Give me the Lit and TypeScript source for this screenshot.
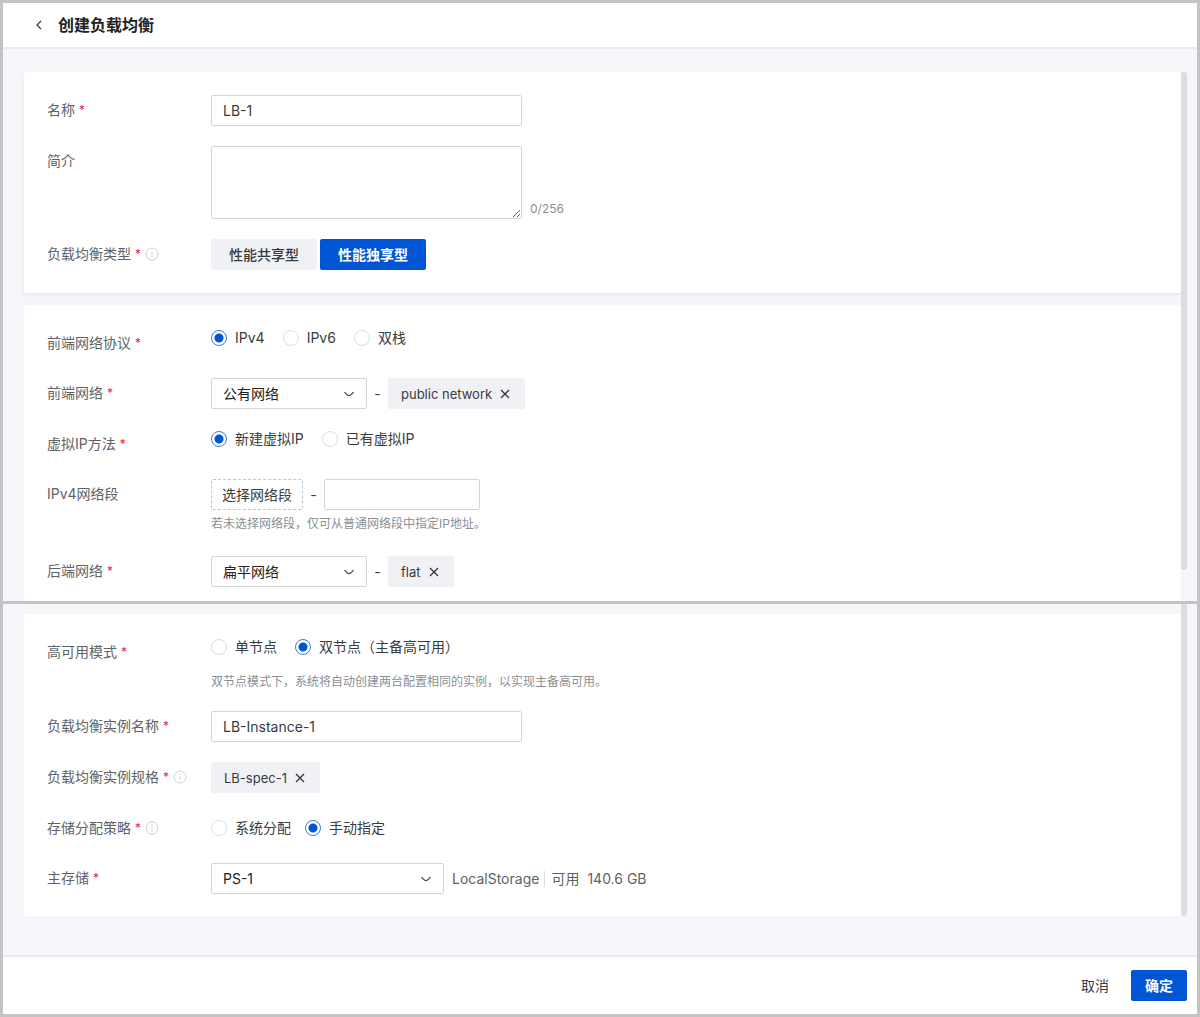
import { LitElement, html, css, svg, nothing } from "lit";
import { customElement, state } from "lit/decorators.js";
import { classMap } from "lit/directives/class-map.js";

type Option = { value: string; text: string };

const chevron = html`<svg class="chevron" viewBox="0 0 12 12" aria-hidden="true">
  <path d="M1.5 4.2 C3 6 4.8 7.6 6 7.6 C7.2 7.6 9 6 10.5 4.2" />
</svg>`;

const cross = svg`<path d="M1 1 L9 9 M9 1 L1 9" />`;

const info = html`<svg class="info" viewBox="0 0 14 14" role="img" aria-label="说明">
  <circle cx="7" cy="7" r="6" />
  <path d="M7 6 V10.2 M7 3.8 V5" />
</svg>`;

@customElement("app-root")
export class AppRoot extends LitElement {
  @state() private kind = "dedicated";
  @state() private summary = "";

  static styles = css`
    :host {
      display: block;
      color: #3a3b3d;
      font: 14px/20px Inter, "Noto Sans CJK SC", sans-serif;
    }
    * {
      box-sizing: border-box;
    }
    button,
    input,
    select,
    textarea {
      margin: 0;
      font: inherit;
      color: inherit;
    }
    button {
      cursor: pointer;
    }
    .page {
      display: flex;
      flex-direction: column;
      min-height: 100vh;
      border: 3px solid #c3c3c3;
      background: #f5f6fa;
    }
    .header {
      display: flex;
      align-items: center;
      gap: 7px;
      height: 46px;
      padding: 0 24px;
      border-bottom: 2px solid #e9eaed;
      background: #fff;
    }
    .back {
      display: grid;
      place-items: center;
      width: 24px;
      height: 24px;
      padding: 0;
      border: 0;
      background: none;
    }
    .back svg {
      width: 10px;
      height: 10px;
      fill: none;
      stroke: #333;
      stroke-width: 1.2;
    }
    .title {
      margin: 0;
      color: #222;
      font-size: 16px;
      font-weight: 600;
      line-height: 24px;
    }
    .pane {
      display: grid;
      grid-template-columns: minmax(0, 1fr) 6px;
      padding: 23px 10px 0 21px;
    }
    .pane.lower {
      flex: 1;
      align-content: start;
      padding-top: 0;
      padding-bottom: 39px;
      border-top: 3px solid #c3c3c3;
    }
    .cards {
      display: flex;
      flex-direction: column;
      gap: 12px;
    }
    .lower .cards {
      padding-top: 10px;
    }
    .thumb {
      margin-bottom: 31px;
      border-radius: 3px;
      background: #dcdddf;
    }
    .lower .thumb {
      margin-bottom: 0;
      border-radius: 0 0 3px 3px;
    }
    .card {
      display: flex;
      flex-direction: column;
      gap: 20px;
      padding: 23px;
      border-radius: 2px;
      background: #fff;
      box-shadow: 0 2px 3px rgba(30, 40, 70, 0.07);
    }
    .card.cut {
      padding-bottom: 14px;
      border-radius: 2px 2px 0 0;
      box-shadow: none;
    }
    .lower .card {
      padding-bottom: 22px;
      box-shadow: none;
    }
    .row {
      display: grid;
      grid-template-columns: 164px minmax(0, 1fr);
    }
    .name {
      display: flex;
      align-items: center;
      gap: 4px;
      height: 30px;
      color: #606266;
    }
    .star {
      color: #f5222d;
      font-size: 12px;
    }
    .info {
      width: 14px;
      height: 14px;
      fill: none;
      stroke: #cfd0d3;
    }
    .line {
      display: flex;
      align-items: center;
      min-height: 30px;
    }
    .line.top {
      align-items: flex-start;
    }
    .line.end {
      align-items: flex-end;
      gap: 8px;
    }
    .field {
      width: 311px;
      height: 31px;
      padding: 0 11px;
      border: 1px solid #d3d5d8;
      border-radius: 2px;
      background: #fff;
    }
    .field.short {
      width: 156px;
    }
    textarea.field {
      display: block;
      height: 73px;
      padding: 5px 11px;
    }
    .count {
      color: #8c8e92;
      font-size: 12px;
    }
    .segment {
      height: 31px;
      padding: 0 18px;
      border: 0;
      border-radius: 2px;
      background: #f0f1f5;
      font-weight: 500;
    }
    .segment.on {
      background: #0055d4;
      color: #fff;
      font-weight: 600;
    }
    .segments {
      gap: 3px;
    }
    .radios {
      gap: 18px;
    }
    .radios.tight {
      gap: 14px;
    }
    .radio {
      display: flex;
      align-items: center;
      gap: 8px;
    }
    .radio input {
      appearance: none;
      width: 16px;
      height: 16px;
      border: 1px solid #dcdde0;
      border-radius: 50%;
      background: #fff;
    }
    .radio input:checked {
      border-color: #3a7be6;
      background: radial-gradient(circle, #0055d4 4px, #fff 5px);
    }
    .pick {
      display: grid;
      width: 156px;
      align-items: center;
    }
    .pick.wide {
      width: 233px;
    }
    .pick select {
      grid-area: 1 / 1;
      width: 100%;
      height: 31px;
      padding: 0 30px 0 11px;
      border: 1px solid #d3d5d8;
      border-radius: 2px;
      background: #fff;
      color: #222;
      appearance: none;
    }
    .chevron {
      grid-area: 1 / 1;
      justify-self: end;
      width: 12px;
      height: 12px;
      margin-right: 12px;
      fill: none;
      stroke: #444;
      stroke-width: 1.3;
      pointer-events: none;
    }
    .dash {
      width: 21px;
      text-align: center;
    }
    .tag {
      display: flex;
      align-items: center;
      gap: 8px;
      height: 31px;
      padding: 0 15px 0 13px;
      border-radius: 2px;
      background: #f0f1f5;
      font-size: 13px;
    }
    .remove {
      display: grid;
      padding: 0;
      border: 0;
      background: none;
    }
    .remove svg {
      width: 10px;
      height: 10px;
      fill: none;
      stroke: #333;
      stroke-width: 1.3;
    }
    .choose {
      height: 31px;
      padding: 0 10px;
      border: 1px dashed #c4c6ca;
      border-radius: 2px;
      background: #fff;
    }
    .hint {
      margin: 5px 0 3px;
      color: #8c8e92;
      font-size: 12px;
      line-height: 18px;
    }
    .line.top + .hint {
      margin: 6px 0 0;
    }
    .storage {
      display: flex;
      align-items: center;
      margin-left: 8px;
      color: #606266;
    }
    .free {
      display: flex;
      gap: 8px;
      margin-left: 5px;
      padding-left: 6px;
      border-left: 1px solid #dcdde0;
      line-height: 16px;
    }
    .footer {
      display: flex;
      justify-content: flex-end;
      align-items: center;
      gap: 8px;
      padding: 13px 10px;
      border-top: 2px solid #e9eaed;
      background: #fff;
    }
    .cancel,
    .confirm {
      height: 31px;
      padding: 0 14px;
      border: 0;
      border-radius: 2px;
      background: none;
    }
    .confirm {
      background: #0055d4;
      color: #fff;
      font-weight: 600;
    }
  `;

  private caption(id: string, text: string, required = true, help = false, group = false) {
    const body = html`<span>${text}</span>${required ? html`<span class="star">*</span>` : nothing}${help
        ? info
        : nothing}`;
    return group
      ? html`<div class="name" id="${id}-name">${body}</div>`
      : html`<label class="name" for=${id}>${body}</label>`;
  }

  private radios(id: string, options: Option[], chosen: string, variant: string) {
    return html`<div class="line radios ${variant}" role="radiogroup" aria-labelledby="${id}-name">
      ${options.map(
        (o) => html`<label class="radio"
          ><input type="radio" name=${id} value=${o.value} ?checked=${o.value === chosen} />${o.text}</label
        >`
      )}
    </div>`;
  }

  private pick(id: string, text: string, wide = false) {
    return html`<div class=${classMap({ pick: true, wide })}>
      <select id=${id}>
        <option>${text}</option>
      </select>
      ${chevron}
    </div>`;
  }

  private tag(text: string, id = "") {
    return html`<span class="tag"
      >${text}<button class="remove" id=${id || nothing} type="button" aria-label="移除 ${text}">
        <svg viewBox="0 0 10 10">${cross}</svg>
      </button></span
    >`;
  }

  private segment(value: string, text: string) {
    const on = this.kind === value;
    return html`<button
      type="button"
      class=${classMap({ segment: true, on })}
      aria-pressed=${on ? "true" : "false"}
      @click=${() => (this.kind = value)}
    >
      ${text}
    </button>`;
  }

  render() {
    return html`<div class="page">
      <header class="header">
        <button class="back" type="button" aria-label="返回">
          <svg viewBox="0 0 10 10"><path d="M7 0.8 L3 5 L7 9.2" /></svg>
        </button>
        <h1 class="title">创建负载均衡</h1>
      </header>

      <main class="pane">
        <div class="cards">
          <section class="card">
            <div class="row">
              ${this.caption("name", "名称")}
              <div class="line"><input class="field" id="name" type="text" value="LB-1" /></div>
            </div>
            <div class="row">
              ${this.caption("summary", "简介", false)}
              <div class="line end">
                <textarea
                  class="field"
                  id="summary"
                  maxlength="256"
                  @input=${(e: Event) => (this.summary = (e.target as HTMLTextAreaElement).value)}
                ></textarea>
                <span class="count">${this.summary.length}/256</span>
              </div>
            </div>
            <div class="row">
              ${this.caption("kind", "负载均衡类型", true, true, true)}
              <div class="line segments" role="group" aria-labelledby="kind-name">
                ${this.segment("shared", "性能共享型")}${this.segment("dedicated", "性能独享型")}
              </div>
            </div>
          </section>

          <section class="card cut">
            <div class="row">
              ${this.caption("protocol", "前端网络协议", true, false, true)}
              ${this.radios(
                "protocol",
                [
                  { value: "4", text: "IPv4" },
                  { value: "6", text: "IPv6" },
                  { value: "dual", text: "双栈" },
                ],
                "4",
                "top"
              )}
            </div>
            <div class="row">
              ${this.caption("front", "前端网络")}
              <div class="line">${this.pick("front", "公有网络")}<span class="dash">-</span>${this.tag("public network")}</div>
            </div>
            <div class="row">
              ${this.caption("vip", "虚拟IP方法", true, false, true)}
              ${this.radios(
                "vip",
                [
                  { value: "new", text: "新建虚拟IP" },
                  { value: "existing", text: "已有虚拟IP" },
                ],
                "new",
                "top"
              )}
            </div>
            <div class="row">
              ${this.caption("range", "IPv4网络段", false)}
              <div>
                <div class="line">
                  <button class="choose" type="button">选择网络段</button><span class="dash">-</span
                  ><input class="field short" id="range" type="text" />
                </div>
                <p class="hint">若未选择网络段，仅可从普通网络段中指定IP地址。</p>
              </div>
            </div>
            <div class="row">
              ${this.caption("back", "后端网络")}
              <div class="line">${this.pick("back", "扁平网络")}<span class="dash">-</span>${this.tag("flat")}</div>
            </div>
          </section>
        </div>
        <div class="thumb"></div>
      </main>

      <div class="pane lower">
        <div class="cards">
          <section class="card">
            <div class="row">
              ${this.caption("mode", "高可用模式", true, false, true)}
              <div>
                ${this.radios(
                  "mode",
                  [
                    { value: "single", text: "单节点" },
                    { value: "double", text: "双节点（主备高可用）" },
                  ],
                  "double",
                  "top"
                )}
                <p class="hint">双节点模式下，系统将自动创建两台配置相同的实例，以实现主备高可用。</p>
              </div>
            </div>
            <div class="row">
              ${this.caption("instance", "负载均衡实例名称")}
              <div class="line"><input class="field" id="instance" type="text" value="LB-Instance-1" /></div>
            </div>
            <div class="row">
              ${this.caption("spec", "负载均衡实例规格", true, true)}
              <div class="line">${this.tag("LB-spec-1", "spec")}</div>
            </div>
            <div class="row">
              ${this.caption("policy", "存储分配策略", true, true, true)}
              ${this.radios(
                "policy",
                [
                  { value: "auto", text: "系统分配" },
                  { value: "manual", text: "手动指定" },
                ],
                "manual",
                "tight"
              )}
            </div>
            <div class="row">
              ${this.caption("storage", "主存储")}
              <div class="line">
                ${this.pick("storage", "PS-1", true)}
                <div class="storage">
                  LocalStorage
                  <span class="free"><span>可用</span><span>140.6 GB</span></span>
                </div>
              </div>
            </div>
          </section>
        </div>
        <div class="thumb"></div>
      </div>

      <footer class="footer">
        <button class="cancel" type="button">取消</button>
        <button class="confirm" type="button">确定</button>
      </footer>
    </div>`;
  }
}
